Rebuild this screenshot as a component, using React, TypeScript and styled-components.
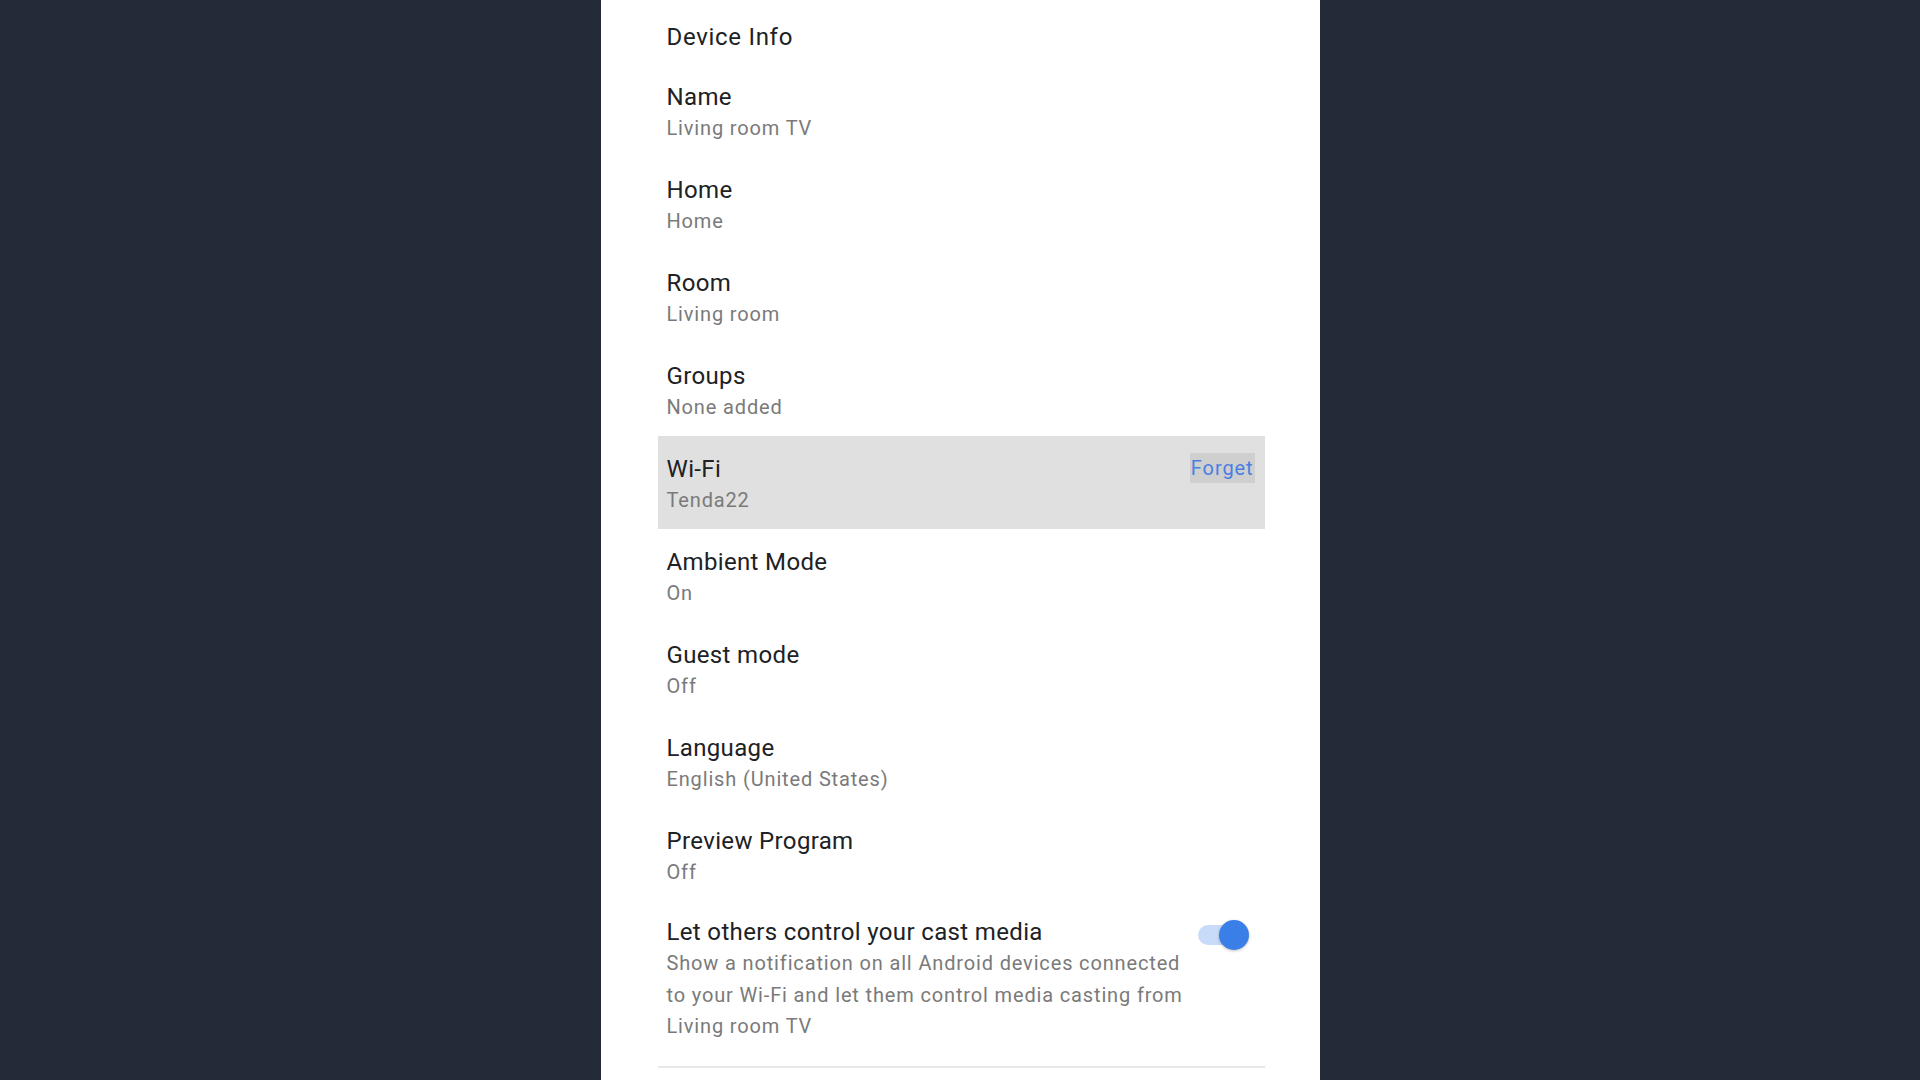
import React from 'react';
import styled, { createGlobalStyle } from 'styled-components';

const GlobalStyle = createGlobalStyle`
  html, body {
    margin: 0;
    padding: 0;
    background: #252a38;
  }

  body {
    font-family: Roboto, 'Noto Sans', 'Liberation Sans', sans-serif;
    -webkit-font-smoothing: antialiased;
  }
`;

const Page = styled.main`
  display: flex;
  justify-content: center;
  width: 100%;
  height: 1080px;
  overflow: hidden;
  background: #252a38;
`;

const Panel = styled.section`
  width: 719px;
  height: 1080px;
  box-sizing: border-box;
  background: #fff;
  padding: 0 55px 0 57px;
`;

const Title = styled.h2`
  margin: 0;
  padding: 21px 0 11px 9px;
  font-size: 24px;
  line-height: 32px;
  font-weight: 400;
  letter-spacing: 0.7px;
  color: #202124;
`;

const List = styled.ul`
  list-style: none;
  margin: 0;
  padding: 0;
`;

const Row = styled.li<{ $active?: boolean; $tall?: boolean }>`
  display: flex;
  align-items: flex-start;
  justify-content: space-between;
  box-sizing: border-box;
  height: ${(p) => (p.$tall ? 'auto' : '93px')};
  padding: ${(p) => (p.$tall ? '15px 10px 23px 9px' : '17px 10px 13px 9px')};
  background: ${(p) => (p.$active ? '#e0e0e0' : 'transparent')};
  border-bottom: ${(p) => (p.$tall ? '2px solid #e8e8e8' : 'none')};
`;

const Text = styled.div<{ $narrow?: boolean }>`
  display: flex;
  flex-direction: column;
  max-width: ${(p) => (p.$narrow ? '525px' : 'none')};
`;

const Label = styled.span`
  font-size: 24px;
  line-height: 32px;
  letter-spacing: 0.35px;
  color: #202124;
`;

const Value = styled.span`
  font-size: 20px;
  line-height: 31.5px;
  letter-spacing: 0.85px;
  color: #7a7a7a;
`;

const ForgetButton = styled.button`
  border: none;
  margin: 0;
  padding: 0 1px;
  height: 30px;
  background: #cfcfcf;
  color: #4a7fe2;
  font-family: inherit;
  font-size: 20px;
  line-height: 30px;
  letter-spacing: 0.9px;
`;

const Toggle = styled.div<{ $on?: boolean }>`
  position: relative;
  flex: none;
  width: 52px;
  height: 32px;
  margin: 3px 5px 0 0;

  &::before {
    content: '';
    position: absolute;
    left: 0;
    top: 6px;
    width: 44px;
    height: 20px;
    border-radius: 10px;
    background: ${(p) => (p.$on ? '#c8dbf8' : '#d0d0d0')};
  }

  &::after {
    content: '';
    position: absolute;
    top: 1px;
    left: ${(p) => (p.$on ? '21px' : '0')};
    width: 30px;
    height: 30px;
    border-radius: 50%;
    background: ${(p) => (p.$on ? '#3a7ee8' : '#f1f1f1')};
    box-shadow: 0 1px 3px rgba(0, 0, 0, 0.25);
  }
`;

const settings = [
  { label: 'Name', value: 'Living room TV' },
  { label: 'Home', value: 'Home' },
  { label: 'Room', value: 'Living room' },
  { label: 'Groups', value: 'None added' },
  { label: 'Wi-Fi', value: 'Tenda22', forget: true },
  { label: 'Ambient Mode', value: 'On' },
  { label: 'Guest mode', value: 'Off' },
  { label: 'Language', value: 'English (United States)' },
  { label: 'Preview Program', value: 'Off' },
];

function App(): JSX.Element {
  return (
    <Page>
      <GlobalStyle />
      <Panel>
        <Title>Device Info</Title>
        <List>
          {settings.map((s) => (
            <Row key={s.label} $active={s.forget}>
              <Text>
                <Label>{s.label}</Label>
                <Value>{s.value}</Value>
              </Text>
              {s.forget && <ForgetButton>Forget</ForgetButton>}
            </Row>
          ))}
          <Row $tall>
            <Text $narrow>
              <Label>Let others control your cast media</Label>
              <Value>
                Show a notification on all Android devices connected to your
                Wi-Fi and let them control media casting from Living room TV
              </Value>
            </Text>
            <Toggle $on />
          </Row>
        </List>
      </Panel>
    </Page>
  );
}

export default App;
